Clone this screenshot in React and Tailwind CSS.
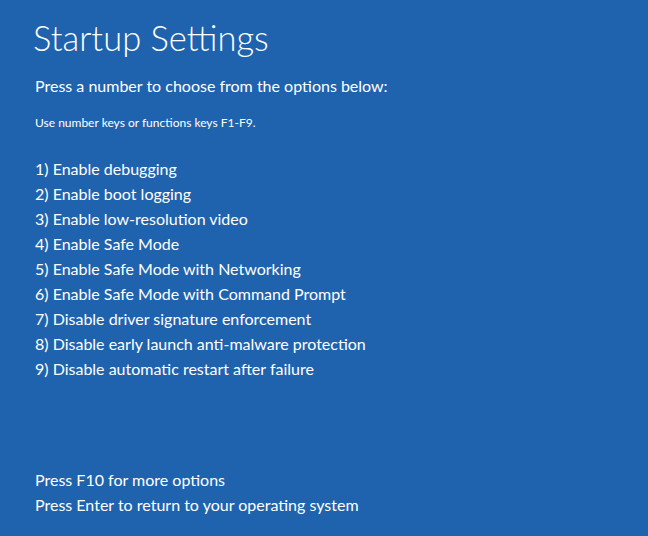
const options = [
  "1) Enable debugging",
  "2) Enable boot logging",
  "3) Enable low-resolution video",
  "4) Enable Safe Mode",
  "5) Enable Safe Mode with Networking",
  "6) Enable Safe Mode with Command Prompt",
  "7) Disable driver signature enforcement",
  "8) Disable early launch anti-malware protection",
  "9) Disable automatic restart after failure",
];

export default function App() {
  return (
    <div
      className="w-[648px] h-[536px] bg-[#1f63ae] text-white pl-[35px] flex flex-col"
      style={{ fontFamily: "Lato, 'Noto Sans', sans-serif" }}
    >
      <h1 className="text-[34.5px] leading-[40px] mt-[18px] -ml-[2px] font-light">Startup Settings</h1>
      <p className="text-[16px] leading-[24px] mt-[16px]">Press a number to choose from the options below:</p>
      <p className="text-[12px] leading-[16px] mt-[17px]">Use number keys or functions keys F1-F9.</p>
      <ul className="mt-[25px] flex flex-col">
        {options.map((o) => (
          <li key={o} className="text-[16px] leading-[25px]">{o}</li>
        ))}
      </ul>
      <div className="mt-auto mb-[19px] flex flex-col">
        <p className="text-[16px] leading-[25px]">Press F10 for more options</p>
        <p className="text-[16px] leading-[25px]">Press Enter to return to your operating system</p>
      </div>
    </div>
  );
}
